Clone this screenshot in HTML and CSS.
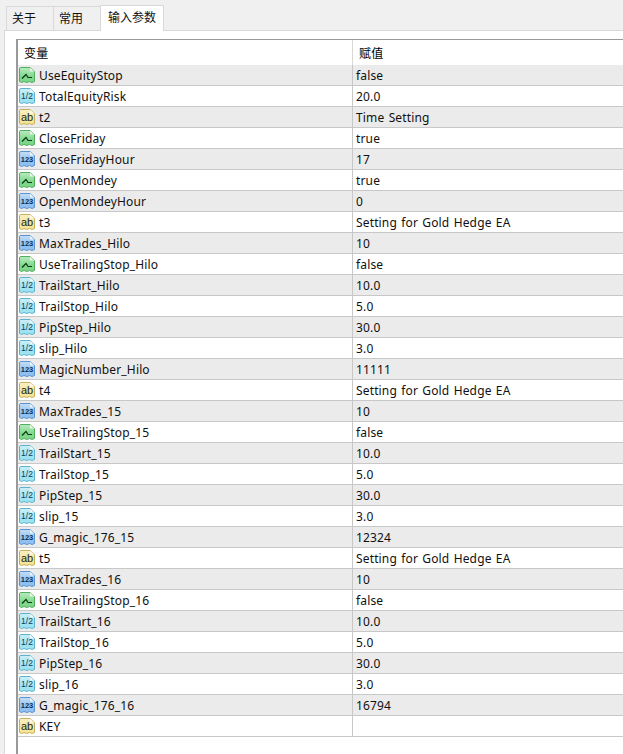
FILE: index.html
```html
<!doctype html>
<html>
  <head>
    <meta charset="UTF-8" />
    <title>输入参数</title>
    <link rel="stylesheet" href="styles.css">
  </head>
  <body>
    <svg class="defs" width="0" height="0">
      <linearGradient id="sheen" x1="0" y1="0" x2="0" y2="1">
        <stop offset="0" stop-color="#fff" stop-opacity="0.45" />
        <stop offset="1" stop-color="#fff" stop-opacity="0" />
      </linearGradient>
      <symbol id="page" viewBox="0 0 16 16">
        <path d="M0.5 2 Q0.5 0.5 2 0.5 H11 L15.5 4.5 V14.5 L13 15.5 L10.5 14.5 L8 15.5 L5 14.5 L2.5 15.5 L0.5 14.5 Z" fill="currentColor" stroke="var(--edge)" />
        <path d="M1 1 H11 L15 5 V10 H1 Z" fill="url(#sheen)" />
        <path d="M11 0.5 V4.5 H15.5 Z" fill="#fff" opacity="0.7" />
      </symbol>
    </svg>

    <div class="tabs">
      <div class="tab">关于</div>
      <div class="tab">常用</div>
      <div class="tab active">输入参数</div>
    </div>

    <div class="panel">
      <div class="table">
        <div class="head">
          <div class="head-name">变量</div>
          <div class="head-value">赋值</div>
        </div>
        <div id="rows"></div>
      </div>
    </div>

    <script src="rows.js"></script>
  </body>
</html>
```

FILE: rows.js
```js
// type: b = bool, d = double, s = string, i = int
const params = [
  ["b", "UseEquityStop", "false"],
  ["d", "TotalEquityRisk", "20.0"],
  ["s", "t2", "Time Setting"],
  ["b", "CloseFriday", "true"],
  ["i", "CloseFridayHour", "17"],
  ["b", "OpenMondey", "true"],
  ["i", "OpenMondeyHour", "0"],
  ["s", "t3", "Setting for Gold Hedge EA"],
  ["i", "MaxTrades_Hilo", "10"],
  ["b", "UseTrailingStop_Hilo", "false"],
  ["d", "TrailStart_Hilo", "10.0"],
  ["d", "TrailStop_Hilo", "5.0"],
  ["d", "PipStep_Hilo", "30.0"],
  ["d", "slip_Hilo", "3.0"],
  ["i", "MagicNumber_Hilo", "11111"],
  ["s", "t4", "Setting for Gold Hedge EA"],
  ["i", "MaxTrades_15", "10"],
  ["b", "UseTrailingStop_15", "false"],
  ["d", "TrailStart_15", "10.0"],
  ["d", "TrailStop_15", "5.0"],
  ["d", "PipStep_15", "30.0"],
  ["d", "slip_15", "3.0"],
  ["i", "G_magic_176_15", "12324"],
  ["s", "t5", "Setting for Gold Hedge EA"],
  ["i", "MaxTrades_16", "10"],
  ["b", "UseTrailingStop_16", "false"],
  ["d", "TrailStart_16", "10.0"],
  ["d", "TrailStop_16", "5.0"],
  ["d", "PipStep_16", "30.0"],
  ["d", "slip_16", "3.0"],
  ["i", "G_magic_176_16", "16794"],
  ["s", "KEY", ""],
];

const marks = {
  b: '<path class="mark-line" d="M3 11.5 L7 7.5 L9 10.5 H13" />',
  d: '<text class="mark-text mark-half" x="8" y="11">1/2</text>',
  s: '<text class="mark-text" x="8" y="11.5">ab</text>',
  i: '<text class="mark-text mark-num" x="8" y="11">123</text>',
};

document.getElementById("rows").innerHTML = params
  .map(([type, name, value]) => `
    <div class="row">
      <div class="cell-name">
        <svg class="icon icon-${type}" viewBox="0 0 16 16" width="16" height="16">
          <use href="#page" />
          ${marks[type]}
        </svg>
        <span>${name}</span>
      </div>
      <div class="cell-value">${value}</div>
    </div>`)
  .join("");
```

FILE: styles.css
```css
body {
  font-family: "Noto Sans", "Noto Sans CJK SC", sans-serif;
  font-size: 12px;
  letter-spacing: 0.15px;
  word-spacing: 1px;
  margin: 0;
  height: 754px;
  overflow: hidden;
  background-color: #f0f0f0;
  color: #111;
}

.defs {
  position: absolute;
}

.tabs {
  display: flex;
  align-items: flex-end;
  height: 30px;
  padding-left: 6px;
  letter-spacing: 0;
  white-space: nowrap;
}

.tab {
  height: 24px;
  line-height: 23px;
  padding: 0 5px;
  margin-right: -1px;
  border: 1px solid #d9d9d9;
  border-bottom: none;
  box-sizing: border-box;
  width: 48px;
  background: #f0f0f0;
}

.tab.active {
  position: relative;
  width: 64px;
  height: 26px;
  margin-bottom: -1px;
  padding: 0 7px;
  background: #fff;
  line-height: 24px;
}

.panel {
  margin-left: 4px;
  height: 724px;
  padding: 8px 0 0 11px;
  box-sizing: border-box;
  background: #fff;
  border-top: 1px solid #d9d9d9;
  border-left: 1px solid #d9d9d9;
}

.table {
  height: 100%;
  border-top: 1px solid #9a9a9a;
  border-left: 2px solid #9a9a9a;
}

.head {
  display: flex;
  height: 25px;
  line-height: 27px;
  color: #000;
}

.head-name {
  width: 334px;
  padding-left: 6px;
  box-sizing: border-box;
}

.head-value {
  padding-left: 6px;
  border-left: 1px solid #d8d8d8;
}

.row {
  display: flex;
  height: 21px;
  box-sizing: border-box;
  border-bottom: 1px solid #c8c8c8;
  line-height: 22px;
}

.row:nth-child(odd) {
  background: #ebebeb;
}

.cell-name {
  display: flex;
  align-items: flex-start;
  gap: 4px;
  width: 335px;
  padding-left: 1px;
  box-sizing: border-box;
  border-right: 1px solid #c8c8c8;
}

.cell-value {
  padding-left: 3px;
}

.icon {
  flex: none;
  margin-top: 2px;
}

.icon-b {
  color: #7cd888;
  --edge: #52ad60;
}

.icon-d {
  color: #9fe2f0;
  --edge: #5db3cf;
}

.icon-s {
  color: #f5e594;
  --edge: #c4b05a;
}

.icon-i {
  color: #8fc1ee;
  --edge: #5a93cf;
}

.mark-line {
  fill: none;
  stroke: #10351a;
  stroke-width: 1.2;
}

.mark-text {
  font-family: "Liberation Sans", sans-serif;
  font-size: 11px;
  letter-spacing: 0;
  text-anchor: middle;
  fill: #222;
}

.mark-half {
  font-size: 8.5px;
  fill: #123a55;
}

.mark-num {
  font-size: 7.5px;
  font-weight: 700;
  fill: #0f2f55;
}
```
